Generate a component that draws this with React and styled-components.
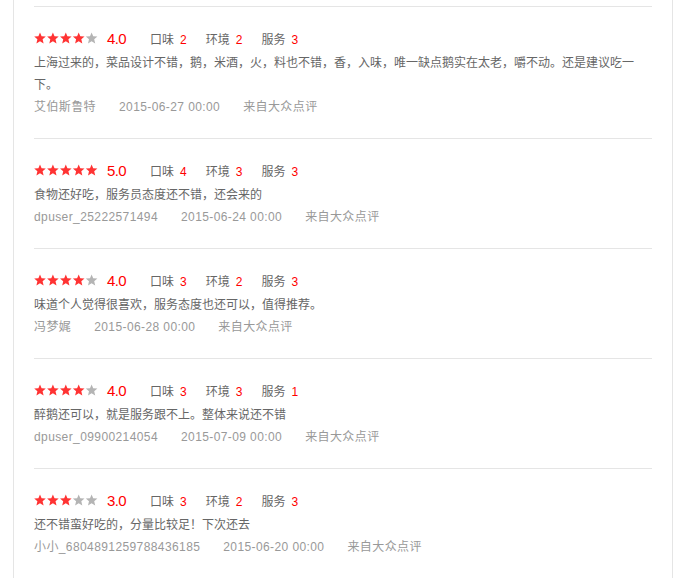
import React from "react"
import styled, { createGlobalStyle } from "styled-components"

const GlobalStyle = createGlobalStyle`
  body {
    margin: 0;
    background: #fff;
    font-family: "Liberation Sans", "Noto Sans CJK SC", sans-serif;
  }
`

const Panel = styled.div`
  width: 618px;
  margin-left: 13px;
  padding: 6px 20px 0;
  border-left: 1px solid #e5e5e5;
  border-right: 1px solid #e5e5e5;
  min-height: 572px;
`

const Review = styled.div`
  border-top: 1px solid #e5e5e5;
  padding: 20px 0 20px;
`

const RatingRow = styled.div`
  display: flex;
  align-items: center;
  height: 22px;
`

const Stars = styled.svg`
  display: block;
  width: 64px;
  height: 12px;
`

const Score = styled.span`
  margin-left: 9px;
  font-size: 15px;
  letter-spacing: -0.6px;
  color: #f00;
`

const Item = styled.span`
  margin-left: ${props => props.first ? "24px" : "19px"};
  font-size: 12px;
  color: #666;
`

const ItemValue = styled.span`
  margin-left: 6px;
  color: #f00;
`

const Body = styled.p`
  margin: 3px 0 0;
  font-size: 12px;
  line-height: 22px;
  color: #666;
`

const Meta = styled.div`
  display: flex;
  gap: 23px;
  font-size: 12px;
  line-height: 22px;
  letter-spacing: 0.4px;
  color: #999;
`

const STAR = "6,0.4 7.6,4.3 11.8,4.6 8.6,7.3 9.6,11.4 6,9.2 2.4,11.4 3.4,7.3 0.2,4.6 4.4,4.3"

const StarRating = ({ value }) => (
  <Stars viewBox="0 0 64 12">
    {[0, 1, 2, 3, 4].map(i => (
      <polygon
        key={i}
        points={STAR}
        transform={`translate(${i * 12.9} 0)`}
        fill={i < value ? "#f33" : "#b4b4b4"}
      />
    ))}
  </Stars>
)

const reviews = [
  {
    stars: 4, taste: 2, env: 2, service: 3,
    text: "上海过来的，菜品设计不错，鹅，米酒，火，料也不错，香，入味，唯一缺点鹅实在太老，嚼不动。还是建议吃一下。",
    user: "艾伯斯鲁特", date: "2015-06-27 00:00"
  },
  {
    stars: 5, taste: 4, env: 3, service: 3,
    text: "食物还好吃，服务员态度还不错，还会来的",
    user: "dpuser_25222571494", date: "2015-06-24 00:00"
  },
  {
    stars: 4, taste: 3, env: 2, service: 3,
    text: "味道个人觉得很喜欢，服务态度也还可以，值得推荐。",
    user: "冯梦娓", date: "2015-06-28 00:00"
  },
  {
    stars: 4, taste: 3, env: 3, service: 1,
    text: "醉鹅还可以，就是服务跟不上。整体来说还不错",
    user: "dpuser_09900214054", date: "2015-07-09 00:00"
  },
  {
    stars: 3, taste: 3, env: 2, service: 3,
    text: "还不错蛮好吃的，分量比较足！下次还去",
    user: "小小_6804891259788436185", date: "2015-06-20 00:00"
  }
]

export default function App() {
  return (
    <>
      <GlobalStyle />
      <Panel>
        {reviews.map((r, i) => (
          <Review key={i}>
            <RatingRow>
              <StarRating value={r.stars} />
              <Score>{r.stars.toFixed(1)}</Score>
              <Item first>口味<ItemValue>{r.taste}</ItemValue></Item>
              <Item>环境<ItemValue>{r.env}</ItemValue></Item>
              <Item>服务<ItemValue>{r.service}</ItemValue></Item>
            </RatingRow>
            <Body>{r.text}</Body>
            <Meta>
              <span>{r.user}</span>
              <span>{r.date}</span>
              <span>来自大众点评</span>
            </Meta>
          </Review>
        ))}
      </Panel>
    </>
  )
}
